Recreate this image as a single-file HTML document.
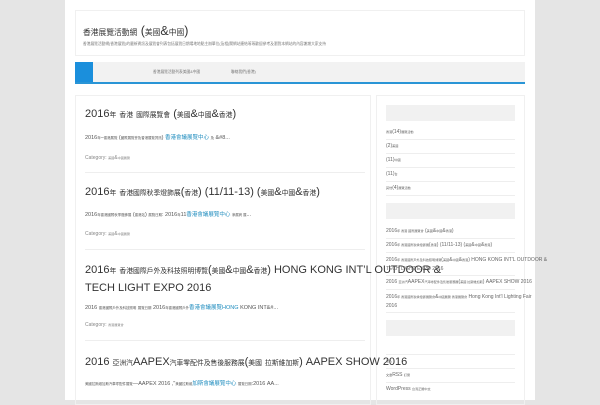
<!DOCTYPE html>
<html><head><meta charset="utf-8"><style>
*{margin:0;padding:0;box-sizing:border-box}
body{width:600px;height:400px;overflow:hidden;background:#e5e5e5;font-family:"Liberation Sans","Noto Sans CJK TC",sans-serif;color:#333;position:relative}
.wrap{position:absolute;left:65px;top:0;width:470px;height:400px;background:#fff}
.abs{position:absolute;white-space:nowrap}
.box{position:absolute;border:1px solid #f0f0f0}
.t{font-size:11px;color:#333;line-height:16px}
.ex{font-size:5.5px;color:#555}
.ex a{color:#1e8cbe}
.cat{font-size:5px;color:#888}
.sep{position:absolute;height:1px;background:#eee}
.sh{position:absolute;left:386px;width:129px;height:16px;background:#f1f1f1}
.si{font-size:5px;color:#666}
.c{font-size:0.62em}
</style></head><body>
<div class="wrap"></div>
<div class="box" style="left:75px;top:10px;width:450px;height:46px"></div>
<div class="abs" style="left:83px;top:24px;font-size:12.5px;color:#333"><span class="c">香港展覽活動網</span> (<span class="c">美國</span>&amp;<span class="c">中國</span>)</div>
<div class="abs" style="left:83px;top:41px;font-size:6px;color:#777"><span class="c">香港展覽活動網(香港展覽)的最新資訊及展覽會列表包括展覽日期場地地點主辦單位(及相)關網站連結等等歡迎參考及瀏覽本網站的內容謝謝大家支持</span></div>
<div style="position:absolute;left:75px;top:62px;width:450px;height:20px;background:#f2f2f2"></div>
<div style="position:absolute;left:75px;top:62px;width:18px;height:22px;background:#1b8fdc"></div>
<div style="position:absolute;left:75px;top:82px;width:450px;height:2px;background:#2a95d6"></div>
<div class="abs" style="left:153px;top:69px;font-size:6px;color:#777"><span class="c">香港展覽活動列表美國&amp;中國</span></div>
<div class="abs" style="left:231px;top:69px;font-size:6px;color:#777"><span class="c">聯絡我們(香港)</span></div>

<div class="box" style="left:75px;top:95px;width:296px;height:310px"></div>
<div class="box" style="left:376px;top:95px;width:149px;height:310px"></div>

<div class="abs t" style="left:85px;top:106px">2016<span class="c">年</span> <span class="c">香港</span> <span class="c">國際展覽會</span> (<span class="c">美國</span>&amp;<span class="c">中國</span>&amp;<span class="c">香港</span>)</div>
<div class="abs ex" style="left:85px;top:133px">2016<span class="c">年</span>–<span class="c">香港展覽</span> (<span class="c">國際展覽會及香港展覽資訊</span>) <a>香港會議展覽中心</a> <span class="c">及</span> &amp;#8...</div>
<div class="abs cat" style="left:85px;top:155px">Category: <span class="c">美國</span>&amp;<span class="c">中國展覽</span></div>
<div class="sep" style="left:85px;top:172px;width:280px"></div>

<div class="abs t" style="left:85px;top:184px">2016<span class="c">年</span> <span class="c">香港國際秋季燈飾展</span>(<span class="c">香港</span>) (11/11-13) (<span class="c">美國</span>&amp;<span class="c">中國</span>&amp;<span class="c">香港</span>)</div>
<div class="abs ex" style="left:85px;top:210px">2016<span class="c">年香港國際秋季燈飾展</span> (<span class="c">香港站</span>) <span class="c">展覽日期</span>: 2016<span class="c">年</span>11<a>香港會議展覽中心</a> <span class="c">參展商 展</span>...</div>
<div class="abs cat" style="left:85px;top:231px">Category: <span class="c">美國</span>&amp;<span class="c">中國展覽</span></div>
<div class="sep" style="left:85px;top:249px;width:280px"></div>

<div class="abs t" style="left:85px;top:262px">2016<span class="c">年</span> <span class="c">香港國際戶外及科技照明博覽</span>(<span class="c">美國</span>&amp;<span class="c">中國</span>&amp;<span class="c">香港</span>) HONG KONG INT’L OUTDOOR &amp;<br>TECH LIGHT EXPO 2016</div>
<div class="abs ex" style="left:85px;top:303px">2016 <span class="c">香港國際戶外及科技照明</span> <span class="c">展覽日期</span> 2016<span class="c">年香港國際戶外</span><a>香港會議展覽HONG</a> KONG INT&amp;#...</div>
<div class="abs cat" style="left:85px;top:322px">Category: <span class="c">香港展覽會</span></div>
<div class="sep" style="left:85px;top:340px;width:280px"></div>

<div class="abs t" style="left:85px;top:354px">2016 <span class="c">亞洲汽</span>AAPEX<span class="c">汽車零配件及售後服務展</span>(<span class="c">美國</span> <span class="c">拉斯維加斯</span>) AAPEX SHOW 2016</div>
<div class="abs ex" style="left:85px;top:379px"><span class="c">美國拉斯維加斯汽車零配件展覽</span>—AAPEX 2016 ,"<span class="c">美國拉斯維</span><a>加斯會議展覽中心</a> <span class="c">展覽日期</span>:2016 AA...</div>

<div class="sh" style="top:105px"></div>
<div class="abs si" style="left:386px;top:129px"><span class="c">香港</span>(14)<span class="c">展覽活動</span></div>
<div class="sep" style="left:386px;top:139px;width:129px"></div>
<div class="abs si" style="left:386px;top:143px">(2)<span class="c">美國</span></div>
<div class="sep" style="left:386px;top:153px;width:129px"></div>
<div class="abs si" style="left:386px;top:157px">(11)<span class="c">中國</span></div>
<div class="sep" style="left:386px;top:167px;width:129px"></div>
<div class="abs si" style="left:386px;top:171px">(11)<span class="c">台</span></div>
<div class="sep" style="left:386px;top:181px;width:129px"></div>
<div class="abs si" style="left:386px;top:185px"><span class="c">其他</span>(4)<span class="c">展覽活動</span></div>
<div class="sep" style="left:386px;top:195px;width:129px"></div>

<div class="sh" style="top:203px"></div>
<div class="abs si" style="left:386px;top:228px">2016<span class="c">年 香港 國際展覽會</span> (<span class="c">美國</span>&amp;<span class="c">中國</span>&amp;<span class="c">香港</span>)</div>
<div class="sep" style="left:386px;top:238px;width:129px"></div>
<div class="abs si" style="left:386px;top:242px">2016<span class="c">年 香港國際秋季燈飾展</span>(<span class="c">香港</span>) (11/11-13) (<span class="c">美國</span>&amp;<span class="c">中國</span>&amp;<span class="c">香港</span>)</div>
<div class="sep" style="left:386px;top:252px;width:129px"></div>
<div class="abs si" style="left:386px;top:256px;line-height:9px">2016<span class="c">年 香港國際戶外及科技照明博覽</span>(<span class="c">美國</span>&amp;<span class="c">中國</span>&amp;<span class="c">香港</span>) HONG KONG INT'L OUTDOOR &amp;<br>TECH LIGHT EXPO 2016</div>
<div class="sep" style="left:386px;top:275px;width:129px"></div>
<div class="abs si" style="left:386px;top:279px">2016 <span class="c">亞洲汽</span>AAPEX<span class="c">汽車零配件及售後服務展</span>(<span class="c">美國 拉斯維加斯</span>) AAPEX SHOW 2016</div>
<div class="sep" style="left:386px;top:289px;width:129px"></div>
<div class="abs si" style="left:386px;top:293px;line-height:9px">2016<span class="c">年 香港國際秋季燈飾展覽會</span>&amp;<span class="c">中國展覽 香港展覽會</span> Hong Kong Int'l Lighting Fair<br>2016</div>
<div class="sep" style="left:386px;top:312px;width:129px"></div>

<div class="sh" style="top:320px"></div>
<div class="sep" style="left:386px;top:354px;width:129px"></div>
<div class="abs si" style="left:386px;top:358px"><span class="c">登入</span></div>
<div class="sep" style="left:386px;top:368px;width:129px"></div>
<div class="abs si" style="left:386px;top:372px"><span class="c">文章</span>RSS <span class="c">訂閱</span></div>
<div class="sep" style="left:386px;top:382px;width:129px"></div>
<div class="abs si" style="left:386px;top:386px">WordPress <span class="c">台灣正體中文</span></div>
</body></html>
